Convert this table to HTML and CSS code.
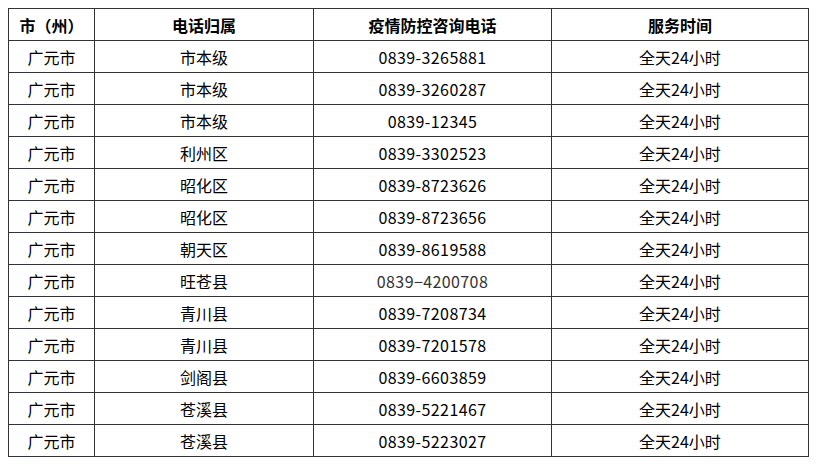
FILE: index.html
```html
<!DOCTYPE html>
<html lang="zh-CN">
<head>
<meta charset="utf-8">
<link rel="stylesheet" href="styles.css">
</head>
<body>
<table class="hotline">
  <colgroup>
    <col class="c1"><col class="c2"><col class="c3"><col class="c4">
  </colgroup>
  <thead>
    <tr><th>市（州）</th><th>电话归属</th><th>疫情防控咨询电话</th><th>服务时间</th></tr>
  </thead>
  <tbody>
    <tr><td>广元市</td><td>市本级</td><td class="tel">0839-3265881</td><td>全天24小时</td></tr>
    <tr><td>广元市</td><td>市本级</td><td class="tel">0839-3260287</td><td>全天24小时</td></tr>
    <tr><td>广元市</td><td>市本级</td><td class="tel">0839-12345</td><td>全天24小时</td></tr>
    <tr><td>广元市</td><td>利州区</td><td class="tel">0839-3302523</td><td>全天24小时</td></tr>
    <tr><td>广元市</td><td>昭化区</td><td class="tel">0839-8723626</td><td>全天24小时</td></tr>
    <tr><td>广元市</td><td>昭化区</td><td class="tel">0839-8723656</td><td>全天24小时</td></tr>
    <tr><td>广元市</td><td>朝天区</td><td class="tel">0839-8619588</td><td>全天24小时</td></tr>
    <tr><td>广元市</td><td>旺苍县</td><td class="tel alt">0839−4200708</td><td>全天24小时</td></tr>
    <tr><td>广元市</td><td>青川县</td><td class="tel">0839-7208734</td><td>全天24小时</td></tr>
    <tr><td>广元市</td><td>青川县</td><td class="tel">0839-7201578</td><td>全天24小时</td></tr>
    <tr><td>广元市</td><td>剑阁县</td><td class="tel">0839-6603859</td><td>全天24小时</td></tr>
    <tr><td>广元市</td><td>苍溪县</td><td class="tel">0839-5221467</td><td>全天24小时</td></tr>
    <tr><td>广元市</td><td>苍溪县</td><td class="tel">0839-5223027</td><td>全天24小时</td></tr>
  </tbody>
</table>
</body>
</html>
```
FILE: styles.css
```css
html, body {
  margin: 0;
  padding: 0;
  background: #ffffff;
}
body {
  padding: 8px;
  font-family: "Noto Sans CJK SC", "Noto Sans", sans-serif;
  font-size: 16px;
  color: #000;
}
.hotline {
  border-collapse: collapse;
  table-layout: fixed;
  width: 800px;
}
.c1 { width: 86px; }
.c2 { width: 219px; }
.c3 { width: 238px; }
.c4 { width: 257px; }
.hotline th,
.hotline td {
  border: 1px solid #333;
  height: 32px;
  padding: 0;
  text-align: center;
  vertical-align: middle;
  line-height: 20px;
  box-sizing: border-box;
}
.hotline th {
  font-weight: bold;
}
.hotline td.tel {
  letter-spacing: 0.4px;
}
.hotline td.alt {
  color: #333;
}
```
